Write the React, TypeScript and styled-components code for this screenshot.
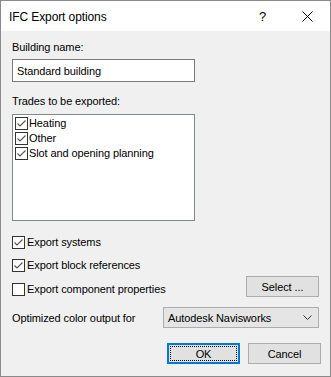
import React from 'react'
import styled, { createGlobalStyle } from 'styled-components'

const Global = createGlobalStyle`
  html, body {
    margin: 0;
    padding: 0;
    background: #f0f0f0;
  }
  * {
    box-sizing: border-box;
  }
`

const Window = styled.div`
  width: 331px;
  height: 377px;
  border: 1px solid #8a8a8a;
  background: #f0f0f0;
  font-family: "Liberation Sans", Arial, sans-serif;
  font-size: 11px;
  letter-spacing: -0.1px;
  color: #000;
  display: flex;
  flex-direction: column;
`

const TitleBar = styled.div`
  height: 30px;
  background: #fff;
  display: flex;
  align-items: center;
  padding-left: 8px;
`

const Title = styled.div`
  flex: 1;
  font-size: 12px;
  letter-spacing: -0.1px;
  padding-top: 1px;
`

const TitleButton = styled.div`
  width: 45px;
  height: 30px;
  display: flex;
  align-items: center;
  justify-content: center;
  font-size: 13px;
`

const Body = styled.div`
  flex: 1;
  display: flex;
  flex-direction: column;
  padding: 9px 11px 0 11px;
`

const Label = styled.div<{ $top?: number }>`
  line-height: 15px;
  height: 15px;
  margin-top: ${(p) => p.$top ?? 0}px;
`

const TextInput = styled.div`
  margin-top: 4px;
  width: 183px;
  height: 23px;
  border: 1px solid #7a7a7a;
  background: #fff;
  display: flex;
  align-items: center;
  padding-left: 4px;
`

const ListBox = styled.div`
  margin-top: 5px;
  width: 183px;
  height: 107px;
  border: 1px solid #828790;
  background: #fff;
  padding: 1px 2px;
`

const ListItem = styled.div`
  height: 15px;
  line-height: 15px;
  display: flex;
  align-items: center;
  gap: 1px;
`

const Box = styled.span`
  width: 13px;
  height: 13px;
  border: 1px solid #333;
  background: #fff;
  display: inline-flex;
  flex-shrink: 0;
`

const CheckRow = styled.div<{ $top: number }>`
  margin-top: ${(p) => p.$top}px;
  height: 16px;
  line-height: 16px;
  display: flex;
  align-items: center;
  gap: 2px;
`

const SplitRow = styled.div<{ $top: number }>`
  margin-top: ${(p) => p.$top}px;
  height: 21px;
  display: flex;
  align-items: flex-end;
  justify-content: space-between;
`

const Button = styled.div<{ $width: number; $default?: boolean }>`
  width: ${(p) => p.$width}px;
  height: 21px;
  background: #e1e1e1;
  border: ${(p) => (p.$default ? '2px solid #0078d7' : '1px solid #adadad')};
  display: flex;
  align-items: center;
  justify-content: center;
  ${(p) => (p.$default ? 'outline: 1px dotted #000; outline-offset: -4px;' : '')}
`

const ComboRow = styled.div`
  margin-top: 10px;
  height: 21px;
  display: flex;
  align-items: center;
  justify-content: space-between;
`

const Combo = styled.div`
  width: 156px;
  height: 21px;
  background: #e5e5e5;
  border: 1px solid #adadad;
  display: flex;
  align-items: center;
  justify-content: space-between;
  padding: 0 6px 0 4px;
`

const ButtonRow = styled.div`
  margin-top: 15px;
  display: flex;
  justify-content: flex-end;
  gap: 8px;
  margin-right: -2px;
`

const Check = ({ on }: { on: boolean }) => (
  <Box>
    {on && (
      <svg width="11" height="11" viewBox="0 0 11 11">
        <path d="M1.5 5.5 L4 8 L9.5 2.5" fill="none" stroke="#555" strokeWidth="1.1" />
      </svg>
    )}
  </Box>
)

export default function App() {
  return (
    <>
      <Global />
      <Window>
        <TitleBar>
          <Title>IFC Export options</Title>
          <TitleButton>?</TitleButton>
          <TitleButton>
            <svg width="11" height="11" viewBox="0 0 11 11">
              <path d="M0.5 0.5 L10.5 10.5 M10.5 0.5 L0.5 10.5" stroke="#000" strokeWidth="1" />
            </svg>
          </TitleButton>
        </TitleBar>
        <Body>
          <Label>Building name:</Label>
          <TextInput>Standard building</TextInput>
          <Label $top={12}>Trades to be exported:</Label>
          <ListBox>
            <ListItem>
              <Check on />
              Heating
            </ListItem>
            <ListItem>
              <Check on />
              Other
            </ListItem>
            <ListItem>
              <Check on />
              Slot and opening planning
            </ListItem>
          </ListBox>
          <CheckRow $top={13}>
            <Check on />
            Export systems
          </CheckRow>
          <CheckRow $top={7}>
            <Check on />
            Export block references
          </CheckRow>
          <SplitRow $top={3}>
            <CheckRow $top={0}>
              <Check on={false} />
              Export component properties
            </CheckRow>
            <Button $width={73}>Select ...</Button>
          </SplitRow>
          <ComboRow>
            <span>Optimized color output for</span>
            <Combo>
              <span>Autodesk Navisworks</span>
              <svg width="9" height="5" viewBox="0 0 9 5">
                <path d="M0.5 0.5 L4.5 4.5 L8.5 0.5" fill="none" stroke="#333" strokeWidth="1" />
              </svg>
            </Combo>
          </ComboRow>
          <ButtonRow>
            <Button $width={73} $default>
              OK
            </Button>
            <Button $width={73}>Cancel</Button>
          </ButtonRow>
        </Body>
      </Window>
    </>
  )
}
